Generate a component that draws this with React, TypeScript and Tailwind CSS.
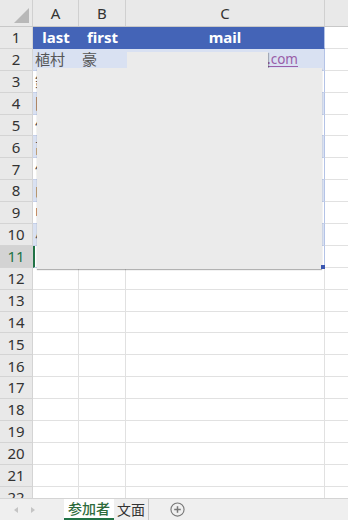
import React from "react";

const ROW_H = "h-[21.9px]";

const names: [string, string][] = [
  ["植村", "豪"],
  ["鈴木", "一郎"],
  ["田中", "花子"],
  ["佐藤", "健"],
  ["高橋", "翔"],
  ["伊藤", "葵"],
  ["山本", "誠"],
  ["中村", "愛"],
  ["小林", "蓮"],
  ["加藤", "陽"],
];

function RowHeader({ n, active = false }: { n: number; active?: boolean }) {
  return (
    <div
      className={`flex w-[33px] shrink-0 items-center justify-center border-b border-r border-[#d4d4d4] text-[15px] ${
        active ? "bg-[#d3d3d3] text-[#217346]" : "bg-[#e9e9e9] text-[#333]"
      }`}
    >
      {n}
    </div>
  );
}

export default function App() {
  const rows = Array.from({ length: 22 }, (_, i) => i + 1);

  return (
    <div
      className="flex h-[520px] w-[348px] flex-col overflow-hidden bg-white"
      style={{ fontFamily: '"Noto Sans", "Noto Sans CJK JP", sans-serif' }}
    >
      {/* grid */}
      <div className="relative h-[498px] overflow-hidden">
        {/* column headers */}
        <div className="flex h-[27px] border-b border-[#c8c8c8] bg-[#e9e9e9] text-[15px] text-[#333]">
          <div className="relative w-[33px] shrink-0 border-r border-[#d0d0d0]">
            <div className="absolute bottom-[3px] right-[3px] h-0 w-0 border-b-[15px] border-l-[15px] border-b-[#b8b8b8] border-l-transparent" />
          </div>
          <div className="flex w-[46px] shrink-0 items-center justify-center border-r border-[#d0d0d0]">A</div>
          <div className="flex w-[47px] shrink-0 items-center justify-center border-r border-[#d0d0d0]">B</div>
          <div className="flex w-[199px] shrink-0 items-center justify-center border-r border-[#d0d0d0]">C</div>
          <div className="flex-1" />
        </div>

        {rows.map((n) => {
          const header = n === 1;
          const banded = n >= 2 && n <= 11 && n % 2 === 0;
          const inTable = n >= 1 && n <= 11;
          const name = n >= 2 && n <= 11 ? names[n - 2] : null;
          const cellBg = header ? "bg-[#4464b7]" : banded ? "bg-[#d9e1f2]" : "bg-white";
          const line = header ? "border-[#4464b7]" : inTable ? "border-[#c5d0ea]" : "border-[#e1e1e1]";
          return (
            <div key={n} className={`flex ${ROW_H}`}>
              <RowHeader n={n} active={n === 11} />
              <div
                className={`flex w-[46px] shrink-0 items-center border-b ${line} ${cellBg} ${
                  header ? "justify-center font-bold text-white" : "pl-[2px] text-[#555]"
                } ${n === 11 ? "border-l-2 border-l-[#217346]" : ""} ${inTable ? "" : "border-r border-r-[#e1e1e1]"} text-[15px]`}
              >
                {header ? "last" : name ? name[0] : ""}
              </div>
              <div
                className={`flex w-[47px] shrink-0 items-center border-b ${line} ${cellBg} ${
                  header ? "justify-center font-bold text-white" : "pl-[3px] text-[#555]"
                } ${inTable ? "" : "border-r border-r-[#e1e1e1]"} text-[15px]`}
              >
                {header ? "first" : name ? name[1] : ""}
              </div>
              <div
                className={`flex w-[199px] shrink-0 items-center border-b ${line} ${cellBg} ${
                  header ? "justify-center font-bold text-white" : ""
                } ${inTable ? "border-r border-r-[#b4c3e6]" : "border-r border-r-[#e1e1e1]"} text-[15px]`}
              >
                {header ? (
                  "mail"
                ) : n === 2 ? (
                  <span className="w-[172px] whitespace-nowrap text-right text-[13.5px] text-[#9a5ea8] underline decoration-1 underline-offset-2">
                    uemura@gmail.com
                  </span>
                ) : null}
              </div>
              <div className="flex-1 border-b border-[#e1e1e1]" />
            </div>
          );
        })}

        {/* floating panels over the sheet */}
        <div className="absolute left-[127px] top-[52px] h-[16px] w-[141px] bg-[#ebebeb] shadow-[1px_1px_1px_rgba(0,0,0,0.25)]" />
        <div className="absolute left-[37px] top-[68px] h-[201px] w-[285px] bg-[#ebebeb] shadow-[0_1px_1px_rgba(0,0,0,0.3)]" />
        <div className="absolute left-[321px] top-[265px] h-[4px] w-[4px] bg-[#3a56b0]" />
      </div>

      {/* sheet tabs */}
      <div className="flex h-[22px] items-stretch border-t border-[#d4d4d4] bg-[#efefef] text-[14px]">
        <div className="flex w-[64px] items-center gap-[13px] pl-[14px]">
          <span className="h-0 w-0 border-y-[3px] border-r-[4px] border-y-transparent border-r-[#c4c4c4]" />
          <span className="h-0 w-0 border-y-[3px] border-l-[4px] border-y-transparent border-l-[#c4c4c4]" />
        </div>
        <div className="flex w-[50px] items-center justify-center border-b-2 border-[#217346] bg-white font-medium text-[#2e6b3c]">
          参加者
        </div>
        <div className="flex w-[35px] items-center justify-center border-r border-[#c8c8c8] text-[#333]">文面</div>
        <div className="flex flex-1 items-center pl-[21px]">
          <svg viewBox="0 0 16 16" className="h-[15px] w-[15px]" fill="none" stroke="#777" strokeWidth="1.2">
            <circle cx="8" cy="8" r="7" />
            <path d="M8 4.5v7M4.5 8h7" strokeWidth="1.6" />
          </svg>
        </div>
      </div>
    </div>
  );
}
